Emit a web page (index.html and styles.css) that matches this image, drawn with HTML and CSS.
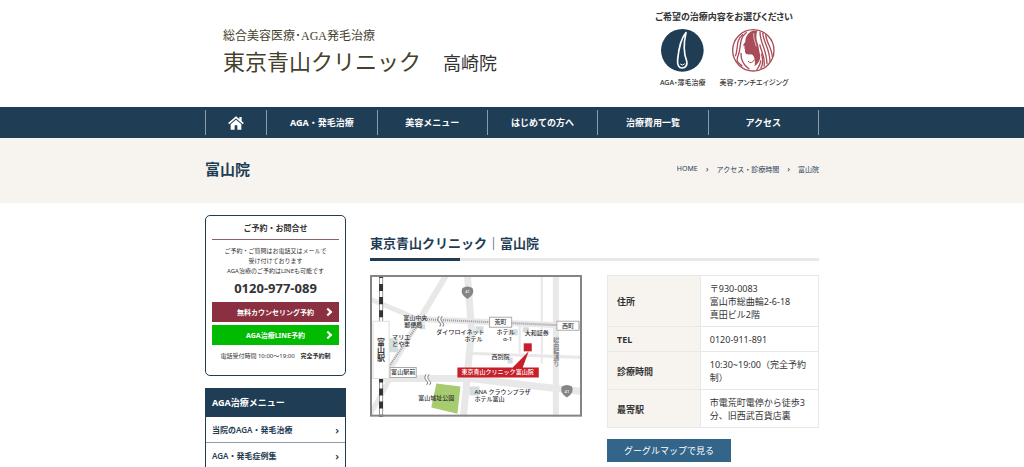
FILE: index.html
```html
<!DOCTYPE html>
<html lang="ja">
<head>
<meta charset="utf-8">
<meta name="viewport" content="width=device-width, initial-scale=1">
<title>富山院 | 東京青山クリニック</title>
<link rel="stylesheet" href="styles.css">
</head>
<body>
<header class="site-header">
  <div class="container header-inner">
    <a class="brand" href="#">
      <span class="brand-sub">総合美容医療･AGA発毛治療</span>
      <span class="brand-row"><span class="brand-name">東京青山クリニック</span><span class="brand-branch">高崎院</span></span>
    </a>
    <div class="treatments">
      <p class="treatments-title">ご希望の治療内容をお選びください</p>
      <div class="treatments-list">
        <a class="treatment" href="#">
          <svg class="treatment-icon" viewBox="0 0 129 129" aria-hidden="true">
            <circle cx="64" cy="64" r="64" fill="#1f3d54"/>
            <path d="M75 11C60 28 53 61 50 91C48 108 54 117 63 117C75 117 80 106 77 96C68 74 67 46 75 11Z" fill="none" stroke="#fff" stroke-width="5" stroke-linejoin="round"/>
            <path d="M58 105Q65 112 71 104" fill="none" stroke="#fff" stroke-width="3"/>
          </svg>
          <span>AGA・薄毛治療</span>
        </a>
        <a class="treatment" href="#">
          <svg class="treatment-icon" viewBox="0 0 129 129" aria-hidden="true">
            <circle cx="64" cy="64" r="62" fill="#fff" stroke="#a84c58" stroke-width="4"/>
            <path d="M62 5C48 10 40 24 40 38L33 49L38 52L37 58L39 61L39 70Q42 79 56 76Q64 77 67 87Q70 97 68 112C84 100 87 86 83 72C80 60 80 50 76 40C72 28 72 16 76 5Z" fill="#a84c58"/>
            <g fill="none" stroke="#a84c58" stroke-width="4">
              <path d="M84 8C84 44 104 58 105 106"/>
              <path d="M92 11C95 42 113 58 114 98"/>
              <path d="M101 16C103 42 120 56 121 84"/>
              <path d="M83 46C88 70 101 84 96 113"/>
              <path d="M88 74C94 90 94 104 86 119"/>
              <path d="M86 94C86 106 81 113 74 123"/>
              <path d="M44 10C18 30 29 56 19 78S20 100 31 112"/>
              <path d="M33 16C9 36 20 58 10 82"/>
              <path d="M27 72C26 92 34 108 52 121"/>
              <path d="M48 96Q58 108 67 92" stroke-width="3"/>
            </g>
            <path d="M66 12C62 26 72 42 72 52" fill="none" stroke="#fff" stroke-width="2"/>
          </svg>
          <span>美容・アンチエイジング</span>
        </a>
      </div>
    </div>
  </div>
</header>

<nav class="global-nav" aria-label="メインメニュー">
  <ul class="container nav-list">
    <li class="nav-home"><a href="#" aria-label="ホーム">
      <svg class="home-icon" viewBox="0 0 48 40" aria-hidden="true">
        <path d="M2 22L24 3L46 22" fill="none" stroke="#fff" stroke-width="5"/>
        <path d="M34 2H41V17L34 11Z" fill="#fff"/>
        <path d="M8 24L24 10L40 24V40H28V27H20V40H8Z" fill="#fff"/>
      </svg></a></li>
    <li><a href="#">AGA・発毛治療</a></li>
    <li><a href="#">美容メニュー</a></li>
    <li><a href="#">はじめての方へ</a></li>
    <li><a href="#">治療費用一覧</a></li>
    <li><a href="#">アクセス</a></li>
  </ul>
</nav>

<div class="page-title">
  <div class="container page-title-inner">
    <h1>富山院</h1>
    <ol class="breadcrumb">
      <li><a href="#">HOME</a></li>
      <li><a href="#">アクセス・診療時間</a></li>
      <li>富山院</li>
    </ol>
  </div>
</div>

<div class="container layout">
  <aside class="sidebar">
    <section class="contact">
      <h2>ご予約・お問合せ</h2>
      <p>ご予約・ご質問はお電話又はメールで<br>受け付けております<br>AGA治療のご予約はLINEも可能です</p>
      <a class="phone" href="tel:0120977089">0120-977-089</a>
      <a class="cta cta-reserve" href="#"><span>無料カウンセリング予約</span></a>
      <a class="cta cta-line" href="#"><span>AGA治療LINE予約</span></a>
      <div class="hours"><span>電話受付時間 10:00～19:00</span><strong>完全予約制</strong></div>
    </section>
    <section class="side-menu">
      <h2>AGA治療メニュー</h2>
      <ul>
        <li><a href="#">当院のAGA・発毛治療</a></li>
        <li><a href="#">AGA・発毛症例集</a></li>
      </ul>
    </section>
  </aside>

  <main class="content">
    <h2 class="section-title">東京青山クリニック｜富山院</h2>
    <div class="access">
      <svg class="map" viewBox="0 0 211 141" role="img" aria-label="富山院周辺の地図">
        <rect width="211" height="141" fill="#fff"/>
        <g fill="none" stroke="#e8e8e8">
          <path d="M76 0L17 98" stroke-width="6"/>
          <path d="M0 24L55 47" stroke-width="5"/>
          <path d="M53 44L211 51" stroke-width="6"/>
          <path d="M97 0L101 55L93 141" stroke-width="7"/>
          <path d="M12 103L100 103L211 116" stroke-width="7"/>
          <path d="M0 139L20 103" stroke-width="5"/>
          <path d="M185 0V141" stroke-width="6"/>
          <path d="M171 0V88M149 50V78" stroke-width="2"/>
          <path d="M98 78L211 82" stroke-width="3"/>
        </g>
        <path d="M19 91L50 46L53 44L211 51" fill="none" stroke="#999" stroke-width="2" stroke-dasharray="1 1"/>
        <path d="M11 0V141" stroke="#333" stroke-width="4"/>
        <path d="M11 3V141" stroke="#fff" stroke-width="3" stroke-dasharray="6 7"/>
        <g fill="#d3dcdf">
          <path d="M19 63H28V77H19ZM49 49H55V54H49ZM105 51H113V58H105ZM138 54H147V60H138ZM152 52H158V57H152ZM137 82H142V88H137ZM99 111H109V120H99Z"/>
        </g>
        <path d="M66 108L90 111L87 138L61 132Z" fill="#a7cc6f"/>
        <path d="M71 41Q68 44 71 47T71 51M58 99Q55 102 58 105T58 109" fill="none" stroke="#fff" stroke-width="3"/>
        <g fill="none" stroke="#888" stroke-width="1">
          <path d="M69 41Q66 44 69 47T69 51M72 41Q69 44 72 47T72 51M56 99Q53 102 56 105T56 109M59 99Q56 102 59 105T59 109"/>
        </g>
        <g fill="#fff" stroke="#aaa" stroke-width="1">
          <path d="M3 46H19V103H3Z" stroke="#ddd"/>
          <path d="M20 92H46V102H20ZM119 42H141V52H119ZM186 46H208V55H186Z"/>
        </g>
        <g fill="#858585">
          <path d="M92 13Q97 10 102 13Q105 19 97 24Q89 19 92 13Z"/>
          <path d="M191 111Q196 108 201 111Q204 117 196 122Q188 117 191 111Z"/>
        </g>
        <path d="M153 68H161V76H153Z" fill="#c7202b"/>
        <path d="M158 76L152 92H168V102H87V92H142Z" fill="#c7202b"/>
        <g class="map-text">
          <text class="station" x="11" y="63">富山駅</text>
          <text x="45" y="45">富山中央</text><text x="43" y="52">郵便局</text>
          <text x="31" y="64">マリエ</text><text x="31" y="71">とやま</text>
          <text x="33" y="99">富山駅前</text>
          <text x="90" y="59">ダイワロイネット</text><text x="103" y="66">ホテル</text>
          <text x="130" y="49">荒町</text><text x="197" y="53">西町</text>
          <text x="135" y="59">ホテル</text><text x="137" y="66">α-1</text>
          <text x="166" y="60">大和証券</text><text x="130" y="84">西別院</text>
          <text x="66" y="124">富山城址公園</text>
          <text class="start" x="104" y="118">ANA クラウンプラザ</text><text class="start" x="104" y="125">ホテル富山</text>
          <text class="light" x="127" y="99">東京青山クリニック富山院</text>
          <text class="road" x="185" y="61">総曲輪通り</text>
          <text class="route" x="97" y="18">41</text><text class="route" x="196" y="117">41</text>
        </g>
        <rect x="1" y="1" width="209" height="139" fill="none" stroke="#858585" stroke-width="2"/>
      </svg>
      <div class="details">
        <table class="info">
          <tbody>
            <tr><th scope="row">住所</th><td>〒930-0083<br>富山市総曲輪2-6-18<br>真田ビル2階</td></tr>
            <tr><th scope="row">TEL</th><td>0120-911-891</td></tr>
            <tr><th scope="row">診療時間</th><td>10:30~19:00（完全予約制）</td></tr>
            <tr><th scope="row">最寄駅</th><td>市電荒町電停から徒歩3分、旧西武百貨店裏</td></tr>
          </tbody>
        </table>
        <a class="map-link" href="#">グーグルマップで見る</a>
      </div>
    </div>
  </main>
</div>
</body>
</html>
```

FILE: styles.css
```css
:root {
  --navy: #1f3d54;
  --ink: #333;
  --beige: #f7f4f0;
}

* {
  box-sizing: border-box;
}

body {
  margin: 0;
  background: #fff;
  color: var(--ink);
  font-family: "Noto Sans", "Noto Sans CJK JP", sans-serif;
  font-size: 9px;
  line-height: 13px;
}

h1, h2, p, ul, ol {
  margin: 0;
  padding: 0;
}

ul, ol {
  list-style: none;
}

a {
  color: inherit;
  text-decoration: none;
}

.container {
  width: 100%;
  max-width: 614px;
  margin: 0 auto;
}

.header-inner {
  display: flex;
  justify-content: space-between;
  padding: 10px 26px 18px 18px;
}

.brand {
  padding-top: 17px;
  color: #45402c;
  font-family: "Liberation Serif", "Noto Sans CJK JP", serif;
  font-weight: 400;
}

.brand-sub {
  display: block;
  font-size: 12px;
  line-height: 18px;
}

.brand-row {
  display: flex;
  align-items: baseline;
  gap: 22px;
  line-height: 36px;
}

.brand-name {
  font-size: 22px;
}

.brand-branch {
  color: var(--ink);
  font-size: 18px;
}

.treatments {
  text-align: center;
}

.treatments-title {
  font-size: 9px;
  font-weight: 700;
  font-feature-settings: "palt";
}

.treatments-list {
  display: flex;
  justify-content: center;
  gap: 14px;
  margin-top: 6px;
}

.treatment {
  display: flex;
  flex-direction: column;
  align-items: center;
  gap: 5px;
  font-size: 7px;
  font-weight: 500;
  line-height: 12px;
  font-feature-settings: "palt";
}

.treatment-icon {
  width: 43px;
  height: 43px;
}

.global-nav {
  background: var(--navy);
  color: #fff;
  padding: 3px 0;
}

.nav-list {
  display: grid;
  grid-template-columns: 61fr repeat(5, 110fr);
  border-left: 1px solid #8b9ba7;
}

.nav-list a {
  display: flex;
  align-items: center;
  justify-content: center;
  height: 25px;
  border-right: 1px solid #8b9ba7;
  font-weight: 700;
}

.home-icon {
  width: 16px;
  height: 14px;
}

.page-title {
  background: var(--beige);
  color: var(--navy);
}

.page-title-inner {
  display: flex;
  align-items: center;
  justify-content: space-between;
  padding: 19px 0 22px;
}

.page-title h1 {
  font-size: 15px;
  line-height: 24px;
}

.breadcrumb {
  display: flex;
  font-size: 7px;
}

.breadcrumb li + li::before {
  content: "›";
  margin: 0 8px;
  font-size: 9px;
}

.layout {
  display: grid;
  grid-template-columns: 141px 1fr;
  gap: 24px;
  padding-top: 12px;
}

.contact {
  border: 1px solid var(--navy);
  border-radius: 5px;
  padding: 5px 6px 12px;
  text-align: center;
}

.contact h2 {
  border-bottom: 1px solid #8e6068;
  padding-bottom: 4px;
  font-size: 8px;
  line-height: 14px;
}

.contact p {
  margin-top: 6px;
  font-size: 6px;
  line-height: 10px;
}

.phone {
  display: block;
  margin: 4px 0 6px;
  font-size: 13px;
  font-weight: 700;
  line-height: 16px;
}

.cta {
  display: flex;
  align-items: center;
  justify-content: center;
  position: relative;
  height: 20px;
  color: #fff;
  font-size: 7px;
  font-weight: 700;
}

.cta::after {
  content: "";
  position: absolute;
  right: 8px;
  width: 4px;
  height: 4px;
  border: solid #fff;
  border-width: 2px 2px 0 0;
  transform: rotate(45deg);
}

.cta-reserve {
  background: #8a3040;
}

.cta-line {
  margin-top: 3px;
  background: #0b0;
}

.hours {
  display: flex;
  justify-content: center;
  gap: 6px;
  margin-top: 5px;
  font-size: 6px;
}

.side-menu {
  margin-top: 12px;
  border: 1px solid var(--navy);
  border-bottom: 0;
  color: var(--navy);
}

.side-menu h2 {
  background: var(--navy);
  color: #fff;
  padding: 7px 6px 8px;
  font-size: 9px;
  line-height: 13px;
}

.side-menu a {
  display: flex;
  justify-content: space-between;
  padding: 6px;
  font-size: 8px;
  font-weight: 600;
}

.side-menu a::after {
  content: "›";
  font-size: 11px;
}

.side-menu li + li {
  border-top: 1px solid #8b9ba7;
}

.content {
  padding-top: 16px;
}

.section-title {
  color: var(--navy);
  font-size: 13px;
  line-height: 24px;
}

.section-title::after {
  content: "";
  display: block;
  height: 3px;
  margin-top: 3px;
  background: linear-gradient(90deg, var(--navy) 20%, #e8e8e8 20%);
}

.access {
  display: grid;
  grid-template-columns: 1fr 1fr;
  align-items: start;
  gap: 25px;
  margin-top: 14px;
}

.map {
  display: block;
  width: 100%;
}

.map-text {
  fill: var(--ink);
  font-size: 6px;
  font-weight: 500;
  text-anchor: middle;
}

.map-text .start {
  text-anchor: start;
}

.map-text .station {
  font-size: 8px;
  font-weight: 700;
  text-anchor: start;
  writing-mode: vertical-rl;
}

.map-text .light {
  fill: #fff;
}

.map-text .road {
  fill: #777;
  text-anchor: start;
  writing-mode: vertical-rl;
}

.map-text .route {
  fill: #fff;
  font-size: 4px;
}

.info {
  width: 100%;
  border-collapse: collapse;
}

.info th,
.info td {
  border: 1px solid #e8e8e8;
  padding: 6px 9px 5px;
  text-align: left;
}

.info th {
  width: 44%;
  background: var(--beige);
}

.map-link {
  display: inline-block;
  margin-top: 11px;
  padding: 5px 17px;
  background: #336489;
  color: #fff;
}
```
